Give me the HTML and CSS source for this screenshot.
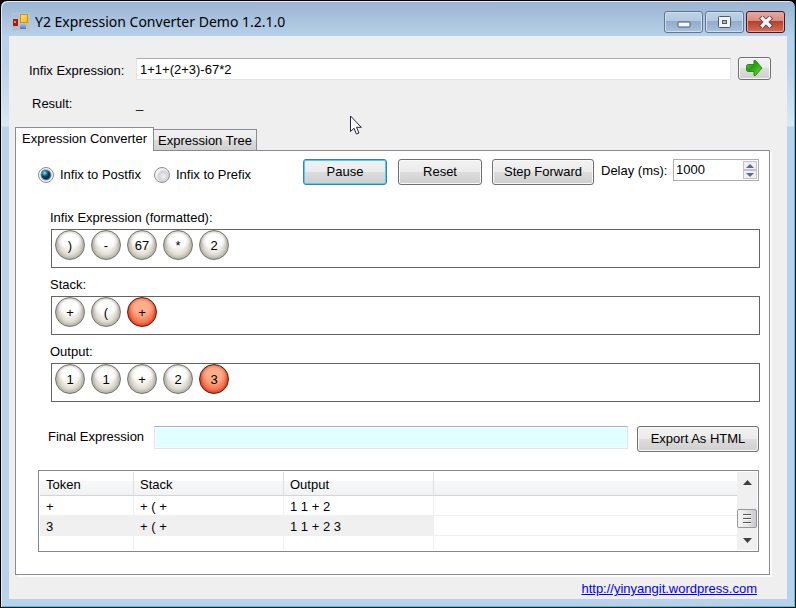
FILE: index.html
```html
<!DOCTYPE html>
<html lang="en">
<head>
<meta charset="utf-8">
<title>Y2 Expression Converter Demo 1.2.1.0</title>
<link rel="stylesheet" href="styles.css">
</head>
<body>
<div class="window">
  <header class="titlebar">
    <svg class="app-icon" width="18" height="18" viewBox="0 0 18 18" aria-hidden="true">
      <defs>
        <linearGradient id="gold" x1="0" y1="0" x2="1" y2="1"><stop offset="0" stop-color="#ffe27a"/><stop offset="1" stop-color="#f3b41c"/></linearGradient>
        <linearGradient id="azure" x1="0" y1="0" x2="0" y2="1"><stop offset="0" stop-color="#9cc0f2"/><stop offset="1" stop-color="#3f78d8"/></linearGradient>
      </defs>
      <rect width="18" height="18" fill="#bfc1c4"/>
      <rect x="1" y="1" width="6" height="4" fill="#a9bfd6"/><rect x="1" y="13" width="6" height="4" fill="#a9bfd6"/>
      <rect x="1" y="6" width="5" height="7" fill="#a91b10"/><rect x="2" y="8" width="2" height="2" fill="#f08070"/>
      <rect x="8.500" y="1.500" width="7" height="8" fill="url(#gold)" stroke="#c8960c"/>
      <rect x="8" y="11" width="6" height="5" fill="url(#azure)"/>
    </svg>
    <h1>Y2 Expression Converter Demo 1.2.1.0</h1>
    <div class="caption-buttons">
      <button class="caption" aria-label="Minimize"><svg width="14" height="8" viewBox="0 0 14 8"><rect x="1" y="1" width="12" height="5" rx="1" fill="#f6f6f6" stroke="#4d5a6b"/></svg></button>
      <button class="caption" aria-label="Maximize"><svg width="13" height="12" viewBox="0 0 13 12"><rect x=".5" y=".5" width="12" height="11" rx="1" fill="#f2f3f4" stroke="#4d5a6b"/><rect x="4.500" y="4.500" width="4" height="3" fill="#a5bdd6" stroke="#4d5a6b"/></svg></button>
      <button class="caption caption-close" aria-label="Close"><svg width="14" height="12" viewBox="0 0 14 12"><path d="M3.500 2.500 10.500 9.500M10.500 2.500 3.500 9.500" stroke="#4c3c48" stroke-width="5" stroke-linecap="square"/><path d="M3.500 2.500 10.500 9.500M10.500 2.500 3.500 9.500" stroke="#f5f5f5" stroke-width="3.400" stroke-linecap="square"/></svg></button>
    </div>
  </header>
  <main class="client">
    <div class="expression-row">
      <label for="infix">Infix Expression:</label>
      <input class="field" id="infix" type="text" value="1+1+(2+3)-67*2">
      <button class="btn go" aria-label="Convert">
        <svg width="18" height="17" viewBox="0 0 18 17"><defs><linearGradient id="leaf" x1="0" y1="0" x2="1" y2="1"><stop offset="0" stop-color="#62d838"/><stop offset=".4" stop-color="#22a010"/><stop offset="1" stop-color="#72dc38"/></linearGradient></defs><path d="M1.500 4.500h6.500v-4h1.500l6.500 7.500-6.500 7.500h-1.500v-4h-6.500l-1-1v-5z" fill="url(#leaf)" stroke="#2a8a1c"/></svg>
      </button>
    </div>
    <div class="result-row"><span class="result-label">Result:</span><output for="infix">_</output></div>
    <div class="tabs" role="tablist">
      <button class="tab active" role="tab" aria-selected="true">Expression Converter</button>
      <button class="tab" role="tab" aria-selected="false">Expression Tree</button>
    </div>
    <section class="panel">
      <div class="toolbar">
        <div class="modes">
          <label><input type="radio" name="mode" checked>Infix to Postfix</label>
          <label><input type="radio" name="mode">Infix to Prefix</label>
        </div>
        <div class="commands">
          <button class="btn focused">Pause</button>
          <button class="btn">Reset</button>
          <button class="btn step">Step Forward</button>
        </div>
        <div class="delay">
          <label for="delay">Delay (ms):</label>
          <div class="spinner">
            <input id="delay" type="number" value="1000">
            <div class="spin-buttons">
              <button aria-label="Increase"><svg width="8" height="4" viewBox="0 0 8 4"><path d="M4 0 8 4H0z"/></svg></button>
              <button aria-label="Decrease"><svg width="8" height="4" viewBox="0 0 8 4"><path d="M0 0H8L4 4z"/></svg></button>
            </div>
          </div>
        </div>
      </div>
      <div class="queues">
        <h2>Infix Expression (formatted):</h2>
        <div class="queue"><span class="ball">)</span><span class="ball">-</span><span class="ball">67</span><span class="ball">*</span><span class="ball">2</span></div>
        <h2>Stack:</h2>
        <div class="queue"><span class="ball">+</span><span class="ball">(</span><span class="ball hot">+</span></div>
        <h2>Output:</h2>
        <div class="queue"><span class="ball">1</span><span class="ball">1</span><span class="ball">+</span><span class="ball">2</span><span class="ball hot">3</span></div>
      </div>
      <div class="final-row">
        <label for="final">Final Expression</label>
        <input class="field final" id="final" type="text" readonly>
        <button class="btn export">Export As HTML</button>
      </div>
      <div class="grid">
        <table>
          <colgroup><col class="col-token"><col class="col-stack"><col class="col-output"><col></colgroup>
          <thead><tr><th>Token</th><th>Stack</th><th>Output</th><th></th></tr></thead>
          <tbody>
            <tr><td>+</td><td>+ ( +</td><td>1 1 + 2</td><td></td></tr>
            <tr class="selected"><td>3</td><td>+ ( +</td><td>1 1 + 2 3</td><td></td></tr>
            <tr class="blank"><td></td><td></td><td></td><td></td></tr>
          </tbody>
        </table>
        <div class="scrollbar">
          <button class="arrow" aria-label="Scroll up"><svg width="9" height="5" viewBox="0 0 9 5"><path d="M4.500 0 9 5H0z"/></svg></button>
          <div class="track"><div class="thumb"><svg width="10" height="11" viewBox="0 0 10 11"><path d="M1 1.500h8M1 5.500h8M1 9.500h8" stroke="#555"/><path d="M1 2.500h8M1 6.500h8M1 10.500h8" stroke="#fff"/></svg></div></div>
          <button class="arrow" aria-label="Scroll down"><svg width="9" height="5" viewBox="0 0 9 5"><path d="M0 0H9L4.500 5z"/></svg></button>
        </div>
      </div>
    </section>
    <footer><a href="http://yinyangit.wordpress.com">http://yinyangit.wordpress.com</a></footer>
  </main>
  <svg class="pointer" width="13" height="20" viewBox="0 0 13 20" aria-hidden="true"><path d="M1.500 1v15.500l3.500-3.200 2.400 5.700 2.600-1-2.500-5.700h4.800z" fill="#fff" stroke="#25253a"/></svg>
</div>
</body>
</html>
```

FILE: styles.css
```css
* { box-sizing: border-box; }

body {
  margin: 0;
  background: #000;
  color: #000;
  font: 13px/16px "Liberation Sans", Arial, sans-serif;
}

button, input { font: inherit; color: inherit; margin: 0; }
button { padding: 0; }
button svg { display: block; }

.window {
  position: relative;
  display: flex;
  flex-direction: column;
  min-height: 100vh;
  padding: 0 8px 8px;
  border: 1px solid #000;
  border-radius: 7px 7px 0 0;
  background:
    linear-gradient(#99b4d1, #b9d1ea 36px, #b9d1ea 60px, #dae7f5 125px, #b9d1ea 126px);
  box-shadow: inset 1px 1px #dfeaf5, inset -1px -1px #35cde6;
}

.titlebar { display: flex; align-items: flex-start; height: 35px; padding: 10px 2px 0 3px; }
.app-icon { margin: 2px 5px 0 0; }
h1 { flex: 1; margin: 0; font: 14px/22px "Noto Sans", "Open Sans", sans-serif; }
.caption-buttons { display: flex; gap: 2px; }
.caption {
  display: grid;
  place-items: center;
  width: 39px;
  height: 22px;
  border: 1px solid #5f7690;
  border-radius: 3px;
  background: linear-gradient(#bfd2e6, #b2c9e0 45%, #91abc8 46%, #a9c3de);
  box-shadow: inset 0 0 0 1px #cfdfee;
}
.caption:first-child { padding-top: 6px; }
.caption-close {
  border-color: #4d1420;
  background: linear-gradient(#eaa99e, #d98a7e 45%, #b5402a 46%, #cf705c);
  box-shadow: inset 0 0 0 1px #e5a59b;
}

.client {
  flex: 1;
  display: flex;
  flex-direction: column;
  padding: 21px 15px 0 6px;
  background: #efefef;
}

.expression-row { display: flex; align-items: flex-end; padding-left: 14px; }
.expression-row label { width: 107px; padding-bottom: 1px; }
.field {
  flex: 1;
  min-width: 0;
  height: 22px;
  padding: 0 3px;
  border: 1px solid #e2e3ea;
  border-top-color: #abadb3;
  border-radius: 1px;
  background: #fff;
}
.btn {
  display: grid;
  place-items: center;
  width: 84px;
  height: 26px;
  border: 1px solid #707070;
  border-radius: 3px;
  background: linear-gradient(#f2f2f2, #ebebeb 48%, #dddddd 50%, #cfcfcf);
  box-shadow: inset 0 0 0 1px #f8f8f8;
}
.btn.go { width: 33px; height: 23px; margin: 0 1px 0 7px; }
.focused { border-color: #3c7fb1; box-shadow: inset 0 0 0 1px #48d0f5; }

.result-row { display: flex; padding: 16px 0 0 17px; }
.result-label { width: 104px; }

.tabs { display: flex; align-items: flex-end; margin-top: 15px; }
.tab {
  width: 103px;
  height: 21px;
  padding-top: 1px;
  border: 1px solid #898c95;
  border-left: 0;
  border-bottom: 0;
  background: linear-gradient(#f1f1f1, #ebebeb 50%, #dcdcdc 51%, #d0d0d0);
}
.tab.active {
  z-index: 1;
  width: 139px;
  height: 24px;
  margin-bottom: -1px;
  border-left: 1px solid #898c95;
  background: #fff;
  padding: 0 0 1px;
}

.panel {
  flex: 1;
  padding: 8px 10px 22px 22px;
  border: 1px solid #898c95;
  background: #fff;
  box-shadow: 2px 2px #fcfcfc;
  margin-right: 2px;
}

.toolbar { display: flex; align-items: flex-start; height: 26px; }
.modes { display: flex; gap: 13px; flex: 1; padding-top: 7px; }
.modes label { display: flex; align-items: center; gap: 6px; white-space: nowrap; line-height: 18px; }
.modes input {
  appearance: none;
  width: 16px;
  height: 16px;
  border: 1px solid #8e8f8f;
  border-radius: 50%;
  background: radial-gradient(circle at 60% 60%, #f0f0f0 0, #d0d3d8 5px, #f4f4f4 7px);
}
.modes input:checked {
  background: radial-gradient(circle at 40% 35%, #9be4f8 0, #2c8ab5 2px, transparent 4px), radial-gradient(circle, #0c3556 0 4px, #7e98a8 5px, #f4f4f4 6px);
}
.commands { display: flex; gap: 11px; }
.btn.step { width: 102px; margin-left: -1px; }
.delay { display: flex; margin-left: 7px; }
.delay label { width: 72px; padding-top: 4px; white-space: nowrap; }
.spinner { display: flex; width: 86px; height: 22px; padding: 1px; border: 1px solid #abadb3; }
.spinner input { flex: 1; min-width: 0; padding: 0 0 0 1px; border: 0; appearance: textfield; }
.spinner input::-webkit-inner-spin-button { appearance: none; margin: 0; }
.spin-buttons { display: flex; flex-direction: column; width: 14px; }
.spin-buttons button {
  flex: 1;
  display: grid;
  place-items: center;
  border: 1px solid #c4c4c8;
  background: #f0f0f0;
  fill: #5368ad;
}

.queues { padding: 25px 0 0 12px; }
h2 { margin: 0; font-size: 13px; font-weight: 400; line-height: 16px; }
.queue {
  display: flex;
  gap: 6px;
  height: 39px;
  margin: 3px -1px 9px 1px;
  padding-left: 3px;
  border: 1px solid #646464;
}
.ball {
  display: grid;
  place-items: center;
  width: 30px;
  height: 30px;
  padding-top: 1px;
  border: 1px solid #777772;
  border-radius: 50%;
  background:
    radial-gradient(ellipse 13px 10px at 50% 32%, #ffffff 0 60%, transparent),
    radial-gradient(circle at 50% 50%, #f0eee6 0 30%, #dedcd3 50%, #adaba2 72%);
}
.hot {
  border-color: #5e1c10;
  background:
    radial-gradient(ellipse 14px 11px at 50% 32%, #ffae8a 0 50%, transparent),
    radial-gradient(circle at 50% 50%, #ff9874 0 30%, #f87350 54%, #c84024 72%);
}

.final-row { display: flex; align-items: flex-start; padding: 15px 0 0 10px; }
.final-row label { width: 106px; padding-top: 3px; }
.field.final { height: 23px; background: #e0ffff; box-shadow: inset 0 0 0 1px #f8ffff; }
.btn.export { width: 122px; margin-left: 9px; }

.grid { display: flex; height: 82px; margin-top: 18px; padding: 1px; border: 1px solid #828790; }
table { flex: 1; table-layout: fixed; width: 0; border-collapse: separate; border-spacing: 0; }
.col-token { width: 94px; }
.col-stack, .col-output { width: 150px; }
th, td {
  height: 20px;
  padding: 2px 6px 0;
  border: 0 solid #f0f0f0;
  border-width: 0 1px 1px 0;
  font-weight: 400;
  text-align: left;
  white-space: nowrap;
}
th {
  height: 24px;
  border-color: #dedfe1;
  border-bottom-color: #d5d5d5;
  background: linear-gradient(#fff 40%, #f7f8fa 41%, #f1f2f4);
}
th:last-child, td:last-child { border-right: 0; }
.selected td:not(:last-child) { border-color: #f0f0f0; background: #f0f0f0; }
.blank td { height: 14px; border-bottom: 0; }

.scrollbar { display: flex; flex-direction: column; width: 20px; background: #f0f0f0; }
.arrow {
  display: grid;
  place-items: center;
  height: 20px;
  border: 0;
  background: none;
  fill: #404040;
}
.track { flex: 1; display: flex; flex-direction: column; justify-content: flex-end; }
.thumb {
  display: grid;
  place-items: center;
  height: 19px;
  margin-bottom: 2px;
  border: 1px solid #979797;
  border-radius: 2px;
  background: linear-gradient(90deg, #f5f5f5, #e6e6e6 50%, #c9c9cc);
}

footer { padding: 6px 15px 2px; text-align: right; }
a { color: #00f; }

.pointer { position: absolute; left: 348px; top: 114px; }
```
